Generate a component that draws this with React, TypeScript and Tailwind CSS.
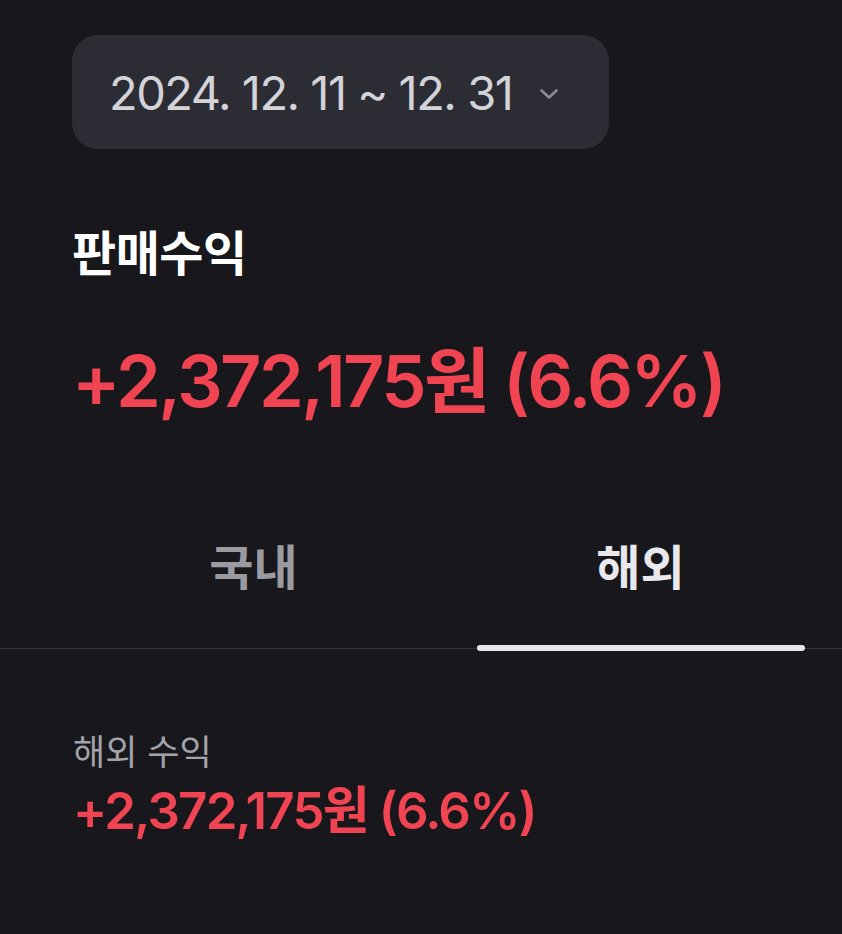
import React from "react";

const font = { fontFamily: '"Inter", "Noto Sans CJK KR", sans-serif' };

export default function App() {
  return (
    <div
      className="min-h-[934px] w-[842px] bg-[#17171c] overflow-hidden"
      style={font}
    >
      <div className="pl-[72px] pt-[35px]">
        <button className="flex h-[114px] w-[537px] items-center rounded-[26px] bg-[#2c2c35] pl-[37px]">
          <span className="text-[47px] leading-none tracking-[-1.5px] text-[#d3d3d8]">
            2024. 12. 11 ~ 12. 31
          </span>
          <svg
            className="ml-[27px] mt-[4px]"
            width="20"
            height="12"
            viewBox="0 0 20 12"
            fill="none"
          >
            <path
              d="M2.5 2.5 L10 9.5 L17.5 2.5"
              stroke="#8c8c94"
              strokeWidth="2.6"
              strokeLinecap="round"
              strokeLinejoin="round"
            />
          </svg>
        </button>

        <h1 className="mt-[81px] text-[48px] font-bold leading-none tracking-[-0.5px] text-white">
          판매수익
        </h1>

        <div className="mt-[67px] text-[72px] font-semibold leading-none tracking-[-2.6px] text-[#f04452]">
          +2,372,175원 (6.6%)
        </div>
      </div>

      <div className="relative mt-[127px] border-b border-[#333339]">
        <div className="flex pl-[90px]">
          <div className="flex h-[104px] w-[327px] items-start justify-center text-[48px] font-bold leading-none text-[#9a9aa0]">
            국내
          </div>
          <div className="ml-[60px] flex h-[104px] w-[327px] items-start justify-center text-[48px] font-bold leading-none text-[#e8e8ed]">
            해외
          </div>
        </div>
        <div className="absolute bottom-[-3px] left-[477px] h-[6px] w-[328px] rounded-full bg-[#e6e6eb]" />
      </div>

      <div className="pl-[73px]">
        <div className="mt-[86px] text-[35px] leading-none text-[#a3a3a9]">
          해외 수익
        </div>
        <div className="mt-[15px] text-[51px] font-semibold leading-none tracking-[-1.8px] text-[#f04452]">
          +2,372,175원 (6.6%)
        </div>
      </div>
    </div>
  );
}
